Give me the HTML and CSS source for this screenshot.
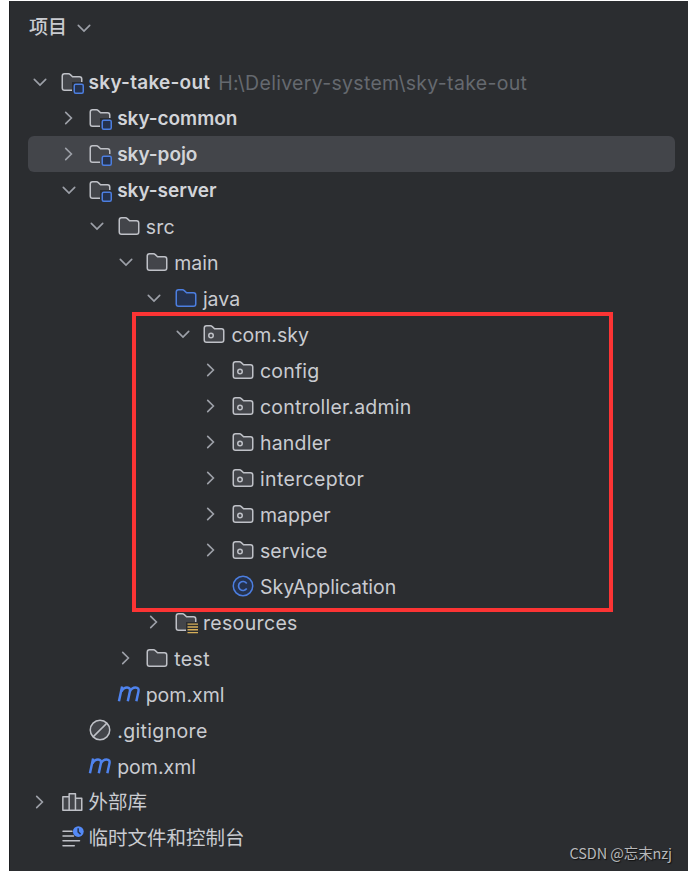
FILE: index.html
```
<!DOCTYPE html>
<html lang="zh-CN">
<head>
<meta charset="utf-8">
<title>sky-take-out</title>
<link rel="stylesheet" href="styles.css">
</head>
<body>
<svg class="sprite" aria-hidden="true">
  <symbol id="down" viewBox="0 0 16 16"><path d="M4.2 6.2 8 10l3.8-3.8" fill="none" stroke="#9da0a8" stroke-width="1.1" stroke-linecap="round"/></symbol>
  <symbol id="right" viewBox="0 0 16 16"><path d="M5.8 4.2 9.6 8l-3.8 3.8" fill="none" stroke="#9da0a8" stroke-width="1.1" stroke-linecap="round"/></symbol>
  <symbol id="folder" viewBox="0 0 16 16"><path d="M1.5 4C1.5 3.1 2.1 2.5 3 2.5h2.7c.4 0 .7.1 1 .4l1.7 1.6H13c.9 0 1.5.6 1.5 1.5v6c0 .9-.6 1.5-1.5 1.5H3c-.9 0-1.5-.6-1.5-1.5Z" fill="#43454a" stroke="#bfc1c7"/></symbol>
  <symbol id="source" viewBox="0 0 16 16"><path d="M1.5 4C1.5 3.1 2.1 2.5 3 2.5h2.7c.4 0 .7.1 1 .4l1.7 1.6H13c.9 0 1.5.6 1.5 1.5v6c0 .9-.6 1.5-1.5 1.5H3c-.9 0-1.5-.6-1.5-1.5Z" fill="#25324d" stroke="#4c7ee0"/></symbol>
  <symbol id="package" viewBox="0 0 16 16"><use href="#folder"/><circle cx="6" cy="9" r="1.5" fill="none" stroke="#bfc1c7"/></symbol>
  <symbol id="module" viewBox="0 0 16 16"><path d="M8 13.5V8h6.5V6c0-.9-.6-1.5-1.5-1.5H8.4L6.7 2.9c-.3-.3-.6-.4-1-.4H3c-.9 0-1.5.6-1.5 1.5v8c0 .9.6 1.5 1.5 1.5Z" fill="#43454a"/><path d="M8 13.5H3c-.9 0-1.5-.6-1.5-1.5V4c0-.9.6-1.5 1.5-1.5h2.7c.4 0 .7.1 1 .4l1.7 1.6H13c.9 0 1.5.6 1.5 1.5v2" fill="none" stroke="#bfc1c7"/><rect x="9.5" y="9.5" width="6" height="6" rx="1" fill="#25324d" stroke="#4c7ee0"/></symbol>
  <symbol id="resources" viewBox="0 0 16 16"><path d="M8 13.5V8h6.5V6c0-.9-.6-1.5-1.5-1.5H8.4L6.7 2.9c-.3-.3-.6-.4-1-.4H3c-.9 0-1.5.6-1.5 1.5v8c0 .9.6 1.5 1.5 1.5Z" fill="#43454a"/><path d="M8 13.5H3c-.9 0-1.5-.6-1.5-1.5V4c0-.9.6-1.5 1.5-1.5h2.7c.4 0 .7.1 1 .4l1.7 1.6H13c.9 0 1.5.6 1.5 1.5v2" fill="none" stroke="#bfc1c7"/><path d="M9 9.4h7M9 11.3h7M9 13.2h7M9 15.1h7" stroke="#d6ae58" stroke-width=".95"/></symbol>
  <symbol id="class" viewBox="0 0 16 16"><circle cx="8" cy="8" r="6.5" fill="#25324d" stroke="#4c7ee0"/><path d="M10.5 6.3A3 3 0 1 0 10.5 9.7" fill="none" stroke="#4c7ee0" stroke-width="1.1"/></symbol>
  <symbol id="maven" viewBox="0 0 16 16"><path d="M1.3 12.9 3.4 3M3 6.2C4 4.3 5.3 3.6 6.7 3.6c1.6 0 2.2 1 1.9 2.6L7.2 12.9M8.6 6.2c1-1.9 2.3-2.6 3.7-2.6 1.7 0 2.4 1 2 2.7l-1.4 6.6" fill="none" stroke="#4f83ee" stroke-width="1.65"/></symbol>
  <symbol id="ignored" viewBox="0 0 16 16"><circle cx="8" cy="8" r="6.5" fill="#43454a" stroke="#bfc1c7"/><path d="m3.4 12.6 9.2-9.2" stroke="#bfc1c7"/></symbol>
  <symbol id="library" viewBox="0 0 16 16"><path d="M1.9 4.5h4.2v9H1.9ZM6.1 2.5h4.2v11H6.1ZM10.3 5.5h4.2v8h-4.2Z" fill="#43454a" stroke="#bfc1c7" stroke-linejoin="round"/></symbol>
  <symbol id="scratches" viewBox="0 0 16 16"><path d="M2 3.5h6M2 6.7h7M2 9.9h11M2 13.1h7.5" stroke="#bfc1c7" stroke-linecap="round"/><circle cx="12.2" cy="3.7" r="3.6" fill="#548af7"/><path d="M12.1 1.5v2.4l1.6 1.6" fill="none" stroke="#25324d"/></symbol>
</svg>
<main class="panel">
  <header class="header"><span>项目</span><svg class="icon"><use href="#down"/></svg></header>
  <ul class="tree">
    <li class="row l0"><svg class="icon arrow"><use href="#down"/></svg><svg class="icon"><use href="#module"/></svg><span class="name bold root">sky-take-out</span><span class="path">H:\Delivery-system\sky-take-out</span></li>
    <li class="row l1"><svg class="icon arrow"><use href="#right"/></svg><svg class="icon"><use href="#module"/></svg><span class="name bold">sky-common</span></li>
    <li class="row l1 selected"><svg class="icon arrow"><use href="#right"/></svg><svg class="icon"><use href="#module"/></svg><span class="name bold">sky-pojo</span></li>
    <li class="row l1"><svg class="icon arrow"><use href="#down"/></svg><svg class="icon"><use href="#module"/></svg><span class="name bold">sky-server</span></li>
    <li class="row l2"><svg class="icon arrow"><use href="#down"/></svg><svg class="icon"><use href="#folder"/></svg><span class="name">src</span></li>
    <li class="row l3"><svg class="icon arrow"><use href="#down"/></svg><svg class="icon"><use href="#folder"/></svg><span class="name tight">main</span></li>
    <li class="row l4"><svg class="icon arrow"><use href="#down"/></svg><svg class="icon"><use href="#source"/></svg><span class="name tight">java</span></li>
    <li class="row l5"><svg class="icon arrow"><use href="#down"/></svg><svg class="icon"><use href="#package"/></svg><span class="name tight">com.sky</span></li>
    <li class="row l6"><svg class="icon arrow"><use href="#right"/></svg><svg class="icon"><use href="#package"/></svg><span class="name">config</span></li>
    <li class="row l6"><svg class="icon arrow"><use href="#right"/></svg><svg class="icon"><use href="#package"/></svg><span class="name">controller.admin</span></li>
    <li class="row l6"><svg class="icon arrow"><use href="#right"/></svg><svg class="icon"><use href="#package"/></svg><span class="name">handler</span></li>
    <li class="row l6"><svg class="icon arrow"><use href="#right"/></svg><svg class="icon"><use href="#package"/></svg><span class="name wide">interceptor</span></li>
    <li class="row l6"><svg class="icon arrow"><use href="#right"/></svg><svg class="icon"><use href="#package"/></svg><span class="name tight">mapper</span></li>
    <li class="row l6"><svg class="icon arrow"><use href="#right"/></svg><svg class="icon"><use href="#package"/></svg><span class="name tight">service</span></li>
    <li class="row l6"><svg class="icon arrow"></svg><svg class="icon"><use href="#class"/></svg><span class="name tight">SkyApplication</span></li>
    <li class="row l4"><svg class="icon arrow"><use href="#right"/></svg><svg class="icon"><use href="#resources"/></svg><span class="name wide">resources</span></li>
    <li class="row l3"><svg class="icon arrow"><use href="#right"/></svg><svg class="icon"><use href="#folder"/></svg><span class="name wide">test</span></li>
    <li class="row l2"><svg class="icon arrow"></svg><svg class="icon"><use href="#maven"/></svg><span class="name tight">pom.xml</span></li>
    <li class="row l1"><svg class="icon arrow"></svg><svg class="icon"><use href="#ignored"/></svg><span class="name wide">.gitignore</span></li>
    <li class="row l1"><svg class="icon arrow"></svg><svg class="icon"><use href="#maven"/></svg><span class="name tight">pom.xml</span></li>
    <li class="row l0"><svg class="icon arrow"><use href="#right"/></svg><svg class="icon"><use href="#library"/></svg><span class="name cjk">外部库</span></li>
    <li class="row l0"><svg class="icon arrow"></svg><svg class="icon"><use href="#scratches"/></svg><span class="name cjk">临时文件和控制台</span></li>
  </ul>
  <div class="highlight"></div>
  <div class="watermark">CSDN @忘末nzj</div>
</main>
</body>
</html>
```
FILE: styles.css
```
* { box-sizing: border-box; }
body { margin: 0; background: #fff; }
.sprite { position: absolute; width: 0; height: 0; }
.panel {
  position: relative;
  height: 870px;
  margin: 1px 0 0 9px;
  overflow: hidden;
  background: #2b2d30;
  border-left: 1px solid #1e1f22;
  color: #c9cbd0;
  font: 19.5px/36px Inter, "Noto Sans CJK SC", sans-serif;
}
.header {
  display: flex;
  align-items: center;
  gap: 5px;
  height: 63px;
  padding: 0 0 10px 19px;
  font-size: 19px;
  font-weight: 500;
}
.icon { flex: none; display: block; width: 24px; height: 24px; overflow: visible; }
.tree { margin: 0; padding: 0 13px 0 18px; list-style: none; }
.row {
  display: flex;
  align-items: center;
  height: 36px;
  border-radius: 6px;
  white-space: nowrap;
}
.selected { background: #43454a; }
.arrow { margin-right: 7.7px; }
.l0 { padding-left: 0; }
.l1 { padding-left: 28.6px; }
.l2 { padding-left: 57.1px; }
.l3 { padding-left: 85.7px; }
.l4 { padding-left: 114.3px; }
.l5 { padding-left: 142.8px; }
.l6 { padding-left: 171.4px; }
.name { margin-left: 4.9px; padding-top: 1px; letter-spacing: .2px; }
.tight { letter-spacing: 0; }
.wide { letter-spacing: .35px; }
.bold { font-size: 19px; font-weight: 600; letter-spacing: -.05px; color: #d2d4d9; }
.root { letter-spacing: .25px; }
.cjk { padding-top: 0; letter-spacing: 0; }
.path { margin-left: 8px; padding-top: 1px; color: #65696f; letter-spacing: .3px; }
.highlight {
  position: absolute;
  left: 122.3px;
  top: 310.5px;
  width: 481px;
  height: 300px;
  border: 4.5px solid #fc3434;
}
.watermark {
  position: absolute;
  right: 16px;
  bottom: 8px;
  color: #b7b8ba;
  font: 14.5px/20px "Noto Sans CJK SC", sans-serif;
  letter-spacing: -.1px;
  text-shadow: 1px 1px 1px #111;
}
```
